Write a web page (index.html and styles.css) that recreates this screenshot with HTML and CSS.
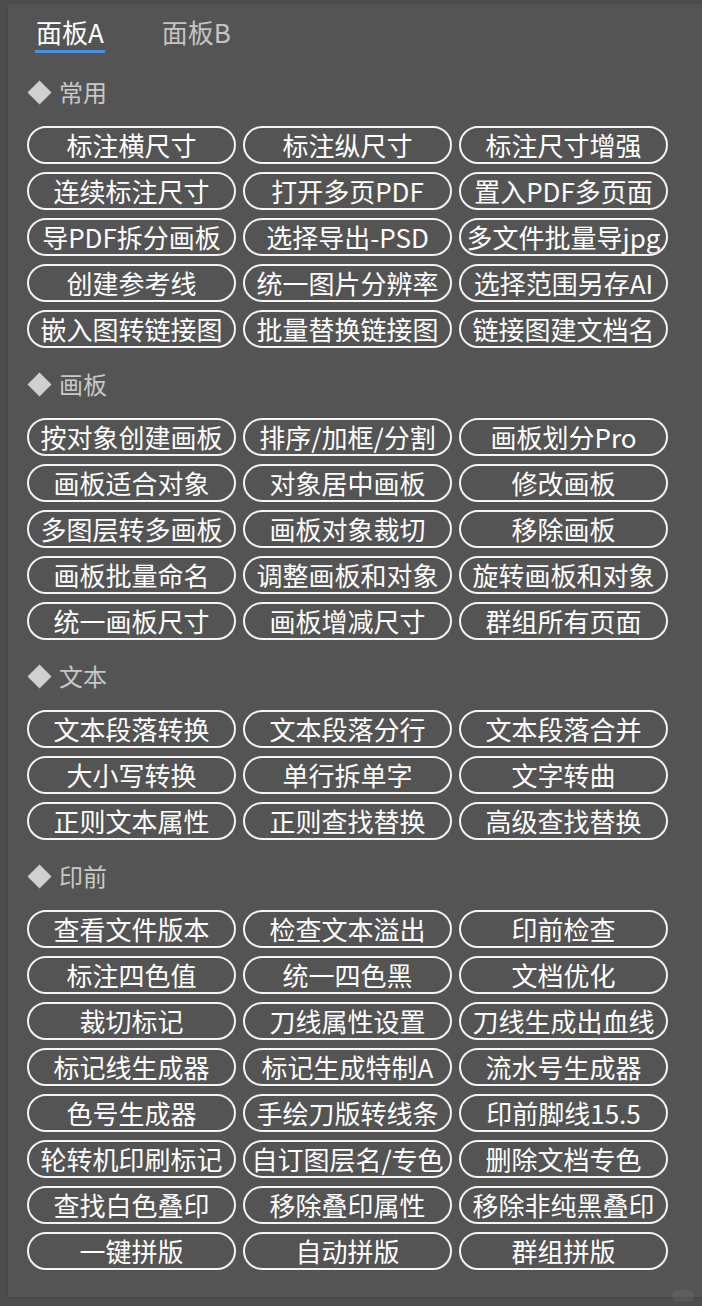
FILE: index.html
```html
<!DOCTYPE html>
<html lang="zh-CN">
<head>
    <meta charset="UTF-8">
    <meta name="viewport" content="width=device-width, initial-scale=1.0">
    <title>脚本面板</title>
    <link rel="stylesheet" href="styles.css">
</head>
<body>
    <div class="panel">
        <div class="tabs">
            <span class="tab active">面板A</span>
            <span class="tab">面板B</span>
        </div>

        <div class="section-title"><span class="diamond"></span>常用</div>
        <div class="button-grid">
            <button class="tool-button">标注横尺寸</button>
            <button class="tool-button">标注纵尺寸</button>
            <button class="tool-button">标注尺寸增强</button>
            <button class="tool-button">连续标注尺寸</button>
            <button class="tool-button">打开多页PDF</button>
            <button class="tool-button">置入PDF多页面</button>
            <button class="tool-button">导PDF拆分画板</button>
            <button class="tool-button">选择导出-PSD</button>
            <button class="tool-button">多文件批量导jpg</button>
            <button class="tool-button">创建参考线</button>
            <button class="tool-button">统一图片分辨率</button>
            <button class="tool-button">选择范围另存AI</button>
            <button class="tool-button">嵌入图转链接图</button>
            <button class="tool-button">批量替换链接图</button>
            <button class="tool-button">链接图建文档名</button>
        </div>

        <div class="section-title"><span class="diamond"></span>画板</div>
        <div class="button-grid">
            <button class="tool-button">按对象创建画板</button>
            <button class="tool-button">排序/加框/分割</button>
            <button class="tool-button">画板划分Pro</button>
            <button class="tool-button">画板适合对象</button>
            <button class="tool-button">对象居中画板</button>
            <button class="tool-button">修改画板</button>
            <button class="tool-button">多图层转多画板</button>
            <button class="tool-button">画板对象裁切</button>
            <button class="tool-button">移除画板</button>
            <button class="tool-button">画板批量命名</button>
            <button class="tool-button">调整画板和对象</button>
            <button class="tool-button">旋转画板和对象</button>
            <button class="tool-button">统一画板尺寸</button>
            <button class="tool-button">画板增减尺寸</button>
            <button class="tool-button">群组所有页面</button>
        </div>

        <div class="section-title"><span class="diamond"></span>文本</div>
        <div class="button-grid">
            <button class="tool-button">文本段落转换</button>
            <button class="tool-button">文本段落分行</button>
            <button class="tool-button">文本段落合并</button>
            <button class="tool-button">大小写转换</button>
            <button class="tool-button">单行拆单字</button>
            <button class="tool-button">文字转曲</button>
            <button class="tool-button">正则文本属性</button>
            <button class="tool-button">正则查找替换</button>
            <button class="tool-button">高级查找替换</button>
        </div>

        <div class="section-title"><span class="diamond"></span>印前</div>
        <div class="button-grid">
            <button class="tool-button">查看文件版本</button>
            <button class="tool-button">检查文本溢出</button>
            <button class="tool-button">印前检查</button>
            <button class="tool-button">标注四色值</button>
            <button class="tool-button">统一四色黑</button>
            <button class="tool-button">文档优化</button>
            <button class="tool-button">裁切标记</button>
            <button class="tool-button">刀线属性设置</button>
            <button class="tool-button">刀线生成出血线</button>
            <button class="tool-button">标记线生成器</button>
            <button class="tool-button">标记生成特制A</button>
            <button class="tool-button">流水号生成器</button>
            <button class="tool-button">色号生成器</button>
            <button class="tool-button">手绘刀版转线条</button>
            <button class="tool-button">印前脚线15.5</button>
            <button class="tool-button">轮转机印刷标记</button>
            <button class="tool-button">自订图层名/专色</button>
            <button class="tool-button">删除文档专色</button>
            <button class="tool-button">查找白色叠印</button>
            <button class="tool-button">移除叠印属性</button>
            <button class="tool-button">移除非纯黑叠印</button>
            <button class="tool-button">一键拼版</button>
            <button class="tool-button">自动拼版</button>
            <button class="tool-button">群组拼版</button>
        </div>
    </div>
    <div class="corner-mark"></div>
</body>
</html>
```

FILE: styles.css
```css
body {
    margin: 0;
    padding: 0;
    background-color: #4d4d4d;
    font-family: "Noto Sans CJK SC", "Noto Sans", sans-serif;
    overflow: hidden;
}

.panel {
    margin: 3px 0 0 7px;
    height: 1295px;
    box-sizing: border-box;
    background-color: #545454;
    border-left: 1px solid #484848;
    border-top: 1px solid #4a4a4a;
    border-bottom: 1px solid #484848;
    padding: 13px 0 0 19px;
}

.tabs {
    display: flex;
    gap: 56px;
    padding-left: 8px;
}

.tab {
    font-size: 26px;
    line-height: 30px;
    color: #c4c4c4;
    padding: 0 1px 3px 1px;
    border-bottom: 3px solid transparent;
}

.tab.active {
    color: #ffffff;
    border-bottom-color: #4a90e2;
}

.section-title {
    display: flex;
    align-items: center;
    margin-top: 20px;
    font-size: 24px;
    line-height: 32px;
    color: #c8c8c8;
}

.tabs + .section-title {
    margin-top: 23px;
}

.diamond {
    width: 17px;
    height: 17px;
    background-color: #d0d0d0;
    transform: rotate(45deg);
    margin: 0 11px 0 4px;
}

.button-grid {
    display: grid;
    grid-template-columns: repeat(3, 209px);
    column-gap: 7px;
    row-gap: 8px;
    margin-top: 18px;
}

.tool-button {
    height: 38px;
    box-sizing: border-box;
    border: 2px solid #f4f4f4;
    border-radius: 20px;
    background: transparent;
    color: #ffffff;
    font-family: "Noto Sans CJK SC", "Noto Sans", sans-serif;
    font-size: 26px;
    line-height: 32px;
    padding: 0;
    white-space: nowrap;
    overflow: hidden;
    display: flex;
    justify-content: center;
    align-items: center;
}

.corner-mark {
    position: absolute;
    left: 672px;
    top: 1290px;
    width: 22px;
    height: 12px;
    border-radius: 6px;
    background-color: rgba(255, 255, 255, 0.06);
}
```
